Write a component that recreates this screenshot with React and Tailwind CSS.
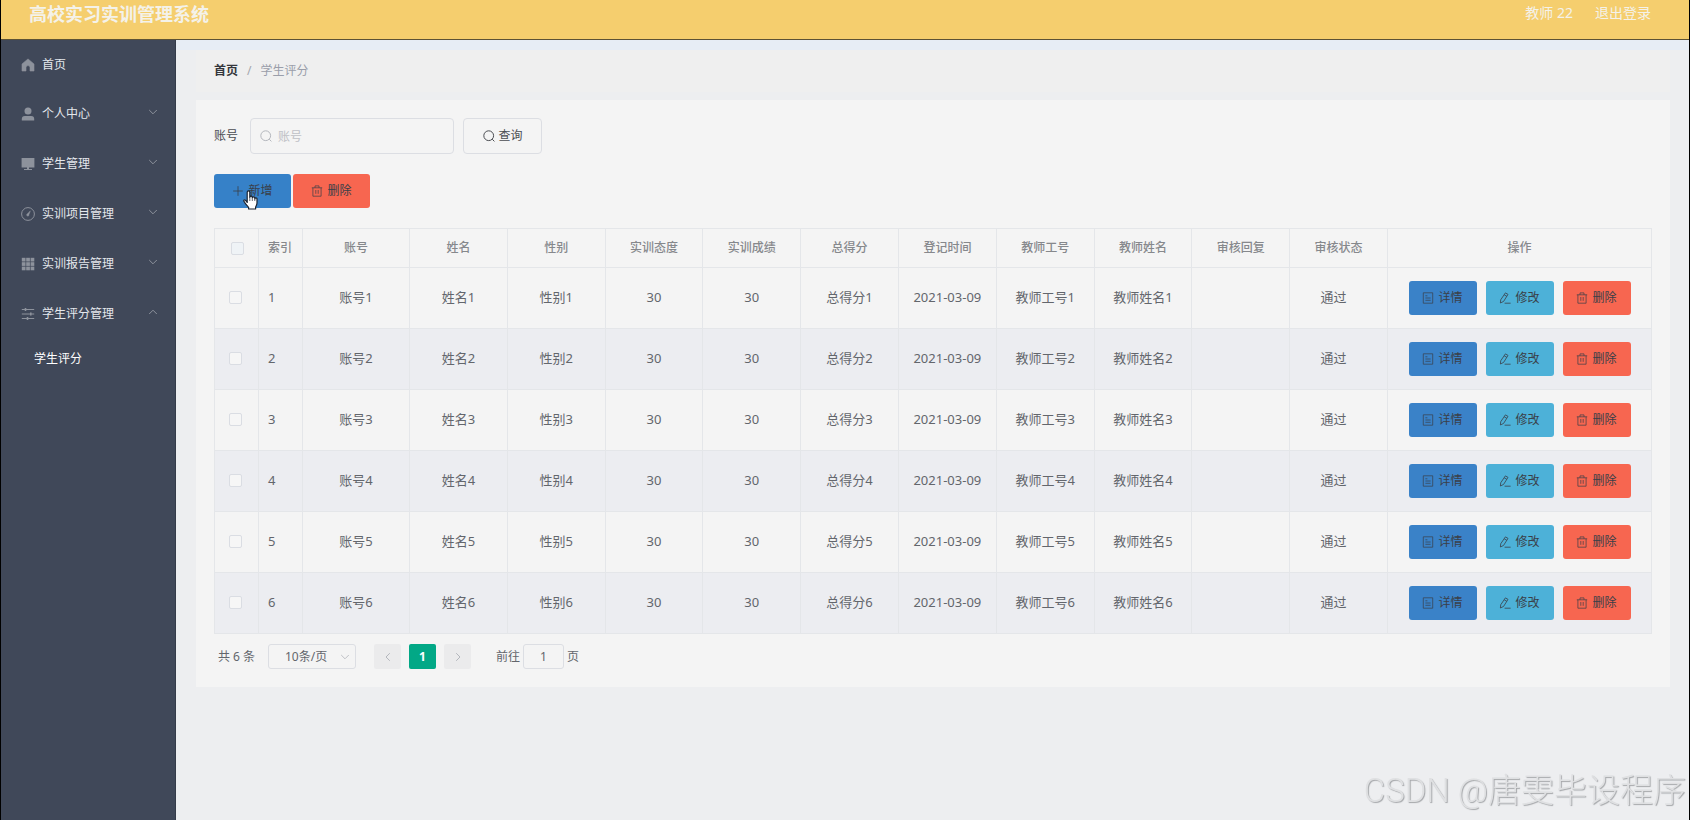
/*
 * App.jsx — Student score list of the internship management admin.
 *
 * Top bar, collapsible side menu, breadcrumb, search form, action buttons,
 * the striped score table and its pagination.
 */
import { useState } from 'react';

const MENUS = [
  { id: 'home', label: '首页', icon: HomeIcon },
  { id: 'profile', label: '个人中心', icon: UserIcon, children: [] },
  { id: 'students', label: '学生管理', icon: MonitorIcon, children: [] },
  { id: 'projects', label: '实训项目管理', icon: CompassIcon, children: [] },
  { id: 'reports', label: '实训报告管理', icon: GridIcon, children: [] },
  { id: 'scores', label: '学生评分管理', icon: SlidersIcon, children: ['学生评分'] },
];

const COLUMNS = [
  '账号', '姓名', '性别', '实训态度', '实训成绩', '总得分',
  '登记时间', '教师工号', '教师姓名', '审核回复', '审核状态',
];

const ROWS = [1, 2, 3, 4, 5, 6].map((n) => ({
  id: n,
  cells: [
    `账号${n}`, `姓名${n}`, `性别${n}`, '30', '30', `总得分${n}`,
    '2021-03-09', `教师工号${n}`, `教师姓名${n}`, '',
  ],
  status: '通过',
}));

/* ---------- icons ---------- */

function HomeIcon() {
  return (
    <svg width="14" height="14" viewBox="0 0 14 14" fill="currentColor">
      <path d="M7 .9 L13 6 V13 H9 V9.6 a2 2 0 0 0 -4 0 V13 H1 V6 Z" stroke="currentColor" strokeWidth="0.6" strokeLinejoin="round" />
    </svg>
  );
}

function UserIcon() {
  return (
    <svg width="14" height="14" viewBox="0 0 14 14" fill="currentColor">
      <circle cx="7" cy="4" r="3.5" />
      <path d="M.8 13.4 V12 a3 3 0 0 1 3 -3 h6.4 a3 3 0 0 1 3 3 v1.4 Z" />
    </svg>
  );
}

function MonitorIcon() {
  return (
    <svg width="14" height="14" viewBox="0 0 14 14" fill="currentColor">
      <path d="M.6 1 h12.8 v9.6 H.6 Z M6 10.6 h2 v1.4 H6 Z M3 12 h8 v1 H3 Z" />
    </svg>
  );
}

function CompassIcon() {
  return (
    <svg width="14" height="14" viewBox="0 0 14 14" fill="none" stroke="currentColor">
      <circle cx="7" cy="7" r="6.4" />
      <path d="M9.4 3.8 L8 7.6 a1.2 1.2 0 1 1 -1.6 -.8 Z" fill="currentColor" strokeWidth="0.4" />
    </svg>
  );
}

function GridIcon() {
  return (
    <svg width="14" height="14" viewBox="0 0 14 14" fill="currentColor">
      {[0.8, 5.2, 9.6].map((y) =>
        [0.8, 5.2, 9.6].map((x) => <rect key={`${x}-${y}`} x={x} y={y} width="3.7" height="3.7" />)
      )}
    </svg>
  );
}

function SlidersIcon() {
  return (
    <svg width="14" height="14" viewBox="0 0 14 14" fill="none" stroke="currentColor">
      <path d="M.8 2.5 H13.2 M.8 7 H13.2 M.8 11.5 H13.2" />
      <path d="M4.5 1 V4 M9.8 5.5 V8.5 M6.5 10 V13" strokeWidth="1.6" />
    </svg>
  );
}

function Chevron({ direction, size = 10 }) {
  const paths = {
    down: 'M1.2 3 L5 6.8 L8.8 3',
    up: 'M1.2 7 L5 3.2 L8.8 7',
    left: 'M6.8 1.2 L3 5 L6.8 8.8',
    right: 'M3.2 1.2 L7 5 L3.2 8.8',
  };
  return (
    <svg width={size} height={size} viewBox="0 0 10 10" fill="none" stroke="currentColor">
      <path d={paths[direction]} />
    </svg>
  );
}

function SearchIcon() {
  return (
    <svg width="12" height="12" viewBox="0 0 12 12" fill="none" stroke="currentColor">
      <circle cx="5.7" cy="5.7" r="4.9" />
      <path d="M9.2 9.2 L11.4 11.4" />
    </svg>
  );
}

function PlusIcon() {
  return (
    <svg width="12" height="12" viewBox="0 0 12 12" fill="none" stroke="currentColor" strokeWidth="0.8">
      <path d="M6 1.2 V10.8 M1.2 6 H10.8" />
    </svg>
  );
}

function TrashIcon() {
  return (
    <svg width="12" height="12" viewBox="0 0 12 12" fill="none" stroke="currentColor" strokeWidth="0.7">
      <path d="M.8 2.8 H11.2 M4 2.8 V.9 H8 V2.8 M1.9 2.8 V11.2 H10.1 V2.8 M4.8 5 V8.8 M7.2 5 V8.8" />
    </svg>
  );
}

function DocIcon() {
  return (
    <svg width="12" height="12" viewBox="0 0 12 12" fill="none" stroke="currentColor" strokeWidth="0.7">
      <path d="M1.3 .8 H10.7 V11.2 H1.3 Z M3.4 3.8 H5.4 M3.4 6 H8.6 M3.4 8.3 H8.6" />
    </svg>
  );
}

function EditIcon() {
  return (
    <svg width="12" height="12" viewBox="0 0 12 12" fill="none" stroke="currentColor" strokeWidth="0.8" strokeLinejoin="round">
      <path d="M6.4 .9 L9 2.4 L4.6 9.4 L1.4 11 L1.7 7.8 Z M5.2 2.8 L7.8 4.3 M5.6 11.2 H11.6" />
    </svg>
  );
}

function HandPointer() {
  return (
    <svg
      className="pointer-events-none absolute top-4 left-7"
      width="18"
      height="20"
      viewBox="0 0 18 20"
      fill="#fff"
      stroke="#1c2430"
      strokeWidth="1.2"
      strokeLinejoin="round"
    >
      <path d="M5.2 12.4 V2.2 a1.3 1.3 0 0 1 2.6 0 V7.4 a1.2 1.2 0 0 1 2.5 0 v.6 a1.2 1.2 0 0 1 2.5 .2 v.6 a1.1 1.1 0 0 1 2.2 .3 V13 c0 2 -1 3 -1.4 4.2 V19 H6.6 V17.4 C5 15.6 3 13.4 1.9 11.2 c-.6 -1.2 .8 -1.8 1.7 -.9 Z" />
      <path d="M7.8 8 V11 M10.3 8.4 V11 M12.8 9 V11" strokeWidth="0.7" />
    </svg>
  );
}

/* ---------- layout ---------- */

function TopBar() {
  return (
    <header className="flex h-10 items-start justify-between border-b border-[#5c5235] bg-[#f5ce6e] pr-[38px] pl-7 text-[#f4f2ea]">
      <h1 className="text-lg leading-7 font-bold">高校实习实训管理系统</h1>
      <div className="flex gap-[22px] text-sm leading-[26px]">
        <span>教师 22</span>
        <a href="#logout">退出登录</a>
      </div>
    </header>
  );
}

function SideMenu() {
  const [open, setOpen] = useState('scores');

  return (
    <nav className="w-[175px] shrink-0 border-r border-[#343b49] bg-[#404859] text-xs text-[#e4e7ec]">
      <ul>
        {MENUS.map(({ id, label, icon: Icon, children }) => (
          <li key={id}>
            <button
              type="button"
              onClick={() => children && setOpen(open === id ? '' : id)}
              className={`flex w-full items-center pr-[17px] pl-5 text-left ${children ? 'h-[50px]' : 'h-[49px]'}`}
            >
              <span className="text-[#8d929c]"><Icon /></span>
              <span className="ml-[7px] flex-1">{label}</span>
              {children && (
                <span className="pb-1 text-[#8d929c]">
                  <Chevron direction={open === id ? 'up' : 'down'} />
                </span>
              )}
            </button>
            {open === id && children?.map((child) => (
              <a key={child} href="#scores" className="flex h-10 items-center pl-[33px] text-white">
                {child}
              </a>
            ))}
          </li>
        ))}
      </ul>
    </nav>
  );
}

function ActionButton({ icon, color, wide, children }) {
  return (
    <button
      type="button"
      className={`inline-flex h-[34px] items-center justify-center gap-1 rounded-[3px] text-xs text-[#3a3f48] ${wide ? 'w-[77px]' : 'w-[68px]'} ${color}`}
    >
      {icon}
      {children}
    </button>
  );
}

function SearchForm() {
  return (
    <form className="flex items-center text-xs" onSubmit={(e) => e.preventDefault()}>
      <label htmlFor="account" className="mr-3 text-[#4b4d52]">账号</label>
      <div className="relative">
        <span className="absolute top-3 left-[10px] text-[#b4b7bd]"><SearchIcon /></span>
        <input
          id="account"
          type="text"
          placeholder="账号"
          className="h-9 w-[204px] rounded-[4px] border border-[#dcdee3] bg-transparent pr-3 pl-[27px] outline-none placeholder:text-[#bfc1c6]"
        />
      </div>
      <button
        type="submit"
        className="ml-[9px] flex h-9 w-[79px] items-center justify-center gap-1 rounded-[4px] border border-[#dcdee3] text-[#4b4d52]"
      >
        <SearchIcon />
        查询
      </button>
    </form>
  );
}

function CheckBox({ label, tint }) {
  return (
    <input
      type="checkbox"
      aria-label={label}
      className={`block size-[13px] appearance-none rounded-[2px] border border-[#dadde3] ${tint}`}
    />
  );
}

function ScoreTable() {
  return (
    <table className="mt-5 w-full table-fixed border-collapse border border-[#e4e6e9] text-center text-[#63666c]">
      <colgroup>
        <col className="w-11" />
        <col className="w-11" />
        <col className="w-[107px]" />
        {COLUMNS.slice(1).map((name) => <col key={name} />)}
        <col className="w-[264px]" />
      </colgroup>
      <thead>
        <tr className="h-[39px] text-xs text-[#86888c]">
          <th className="border border-[#e4e6e9] pl-4">
            <CheckBox label="全选" tint="bg-[#eff3f6]" />
          </th>
          <th className="border border-[#e4e6e9] pl-[9px] text-left font-medium">索引</th>
          {COLUMNS.map((name) => (
            <th key={name} className="border border-[#e4e6e9] font-medium">{name}</th>
          ))}
          <th className="border border-[#e4e6e9] font-medium">操作</th>
        </tr>
      </thead>
      <tbody>
        {ROWS.map((row) => (
          <tr key={row.id} className="h-[61px] even:bg-[#ecedf1]">
            <td className="border border-[#e4e6e9] pb-0.5 pl-[14px]">
              <CheckBox label={`选择${row.id}`} tint="bg-[#f6f6f6]" />
            </td>
            <td className="border border-[#e4e6e9] pb-0.5 pl-[9px] text-left">{row.id}</td>
            {row.cells.map((text, i) => (
              <td key={COLUMNS[i]} className="border border-[#e4e6e9] pb-0.5">{text}</td>
            ))}
            <td className="border border-[#e4e6e9] pr-[10px] pb-0.5">{row.status}</td>
            <td className="border border-[#e4e6e9]">
              <div className="flex justify-center gap-[9px]">
                <ActionButton icon={<DocIcon />} color="bg-[#3a82c8]">详情</ActionButton>
                <ActionButton icon={<EditIcon />} color="bg-[#4db1d8]">修改</ActionButton>
                <ActionButton icon={<TrashIcon />} color="bg-[#f76650]">删除</ActionButton>
              </div>
            </td>
          </tr>
        ))}
      </tbody>
    </table>
  );
}

function Pagination() {
  return (
    <div className="mt-[10px] flex items-center pl-1 text-xs text-[#63666c]">
      <span className="w-[50px]">共 6 条</span>
      <div className="relative">
        <select
          aria-label="每页条数"
          className="h-[25px] w-[88px] appearance-none rounded-[3px] border border-[#dcdee3] bg-transparent pr-3 pl-4"
        >
          <option>10条/页</option>
        </select>
        <span className="pointer-events-none absolute top-2 right-[6px] text-[#bfc1c6]">
          <Chevron direction="down" />
        </span>
      </div>
      <div className="ml-[18px] flex gap-2">
        <button type="button" aria-label="上一页" className="flex h-[25px] w-[27px] items-center justify-center rounded-[2px] bg-[#ebebec] text-[#b4b7bd]">
          <Chevron direction="left" />
        </button>
        <button type="button" className="h-[25px] w-[27px] rounded-[2px] bg-[#02a886] font-bold text-white">1</button>
        <button type="button" aria-label="下一页" className="flex h-[25px] w-[27px] items-center justify-center rounded-[2px] bg-[#ebebec] text-[#b4b7bd]">
          <Chevron direction="right" />
        </button>
      </div>
      <label htmlFor="page" className="ml-[25px]">前往</label>
      <input
        id="page"
        type="text"
        defaultValue="1"
        className="mx-[3px] h-[25px] w-[41px] rounded-[3px] border border-[#dcdee3] bg-transparent text-center outline-none"
      />
      <span>页</span>
    </div>
  );
}

export default function App() {
  return (
    <div className="flex min-h-screen flex-col border-x border-black bg-[#edeef0] font-['Noto_Sans','Noto_Sans_CJK_SC',sans-serif] text-[13px] leading-5">
      <TopBar />
      <div className="flex flex-1">
        <SideMenu />
        <main className="min-w-0 flex-1">
          <div className="h-[10px] bg-[#e7edf5]" />
          <div className="pr-[19px] pl-5">
            <div className="flex h-[42px] items-center gap-[9px] bg-[#efefef] pl-[18px] text-xs">
              <a href="#home" className="font-bold text-[#34363b]">首页</a>
              <span className="text-[#a3a6ad]">/</span>
              <span className="text-[#9a9eaa]">学生评分</span>
            </div>
            <section className="mt-2 bg-[#f4f4f4] p-[18px]">
              <SearchForm />
              <div className="relative mt-5 flex gap-[2px]">
                <ActionButton wide icon={<PlusIcon />} color="bg-[#3681c8]">新增</ActionButton>
                <ActionButton wide icon={<TrashIcon />} color="bg-[#f76650]">删除</ActionButton>
                <HandPointer />
              </div>
              <ScoreTable />
              <Pagination />
            </section>
          </div>
        </main>
      </div>
      <div className="pointer-events-none fixed right-1 bottom-[7px] font-['Roboto','Noto_Sans_CJK_SC',sans-serif] text-[33px] leading-11 font-light text-[#dfe0e2] [text-shadow:1px_1px_1px_#a4a6a9]">
        CSDN @唐雯毕设程序
      </div>
    </div>
  );
}
